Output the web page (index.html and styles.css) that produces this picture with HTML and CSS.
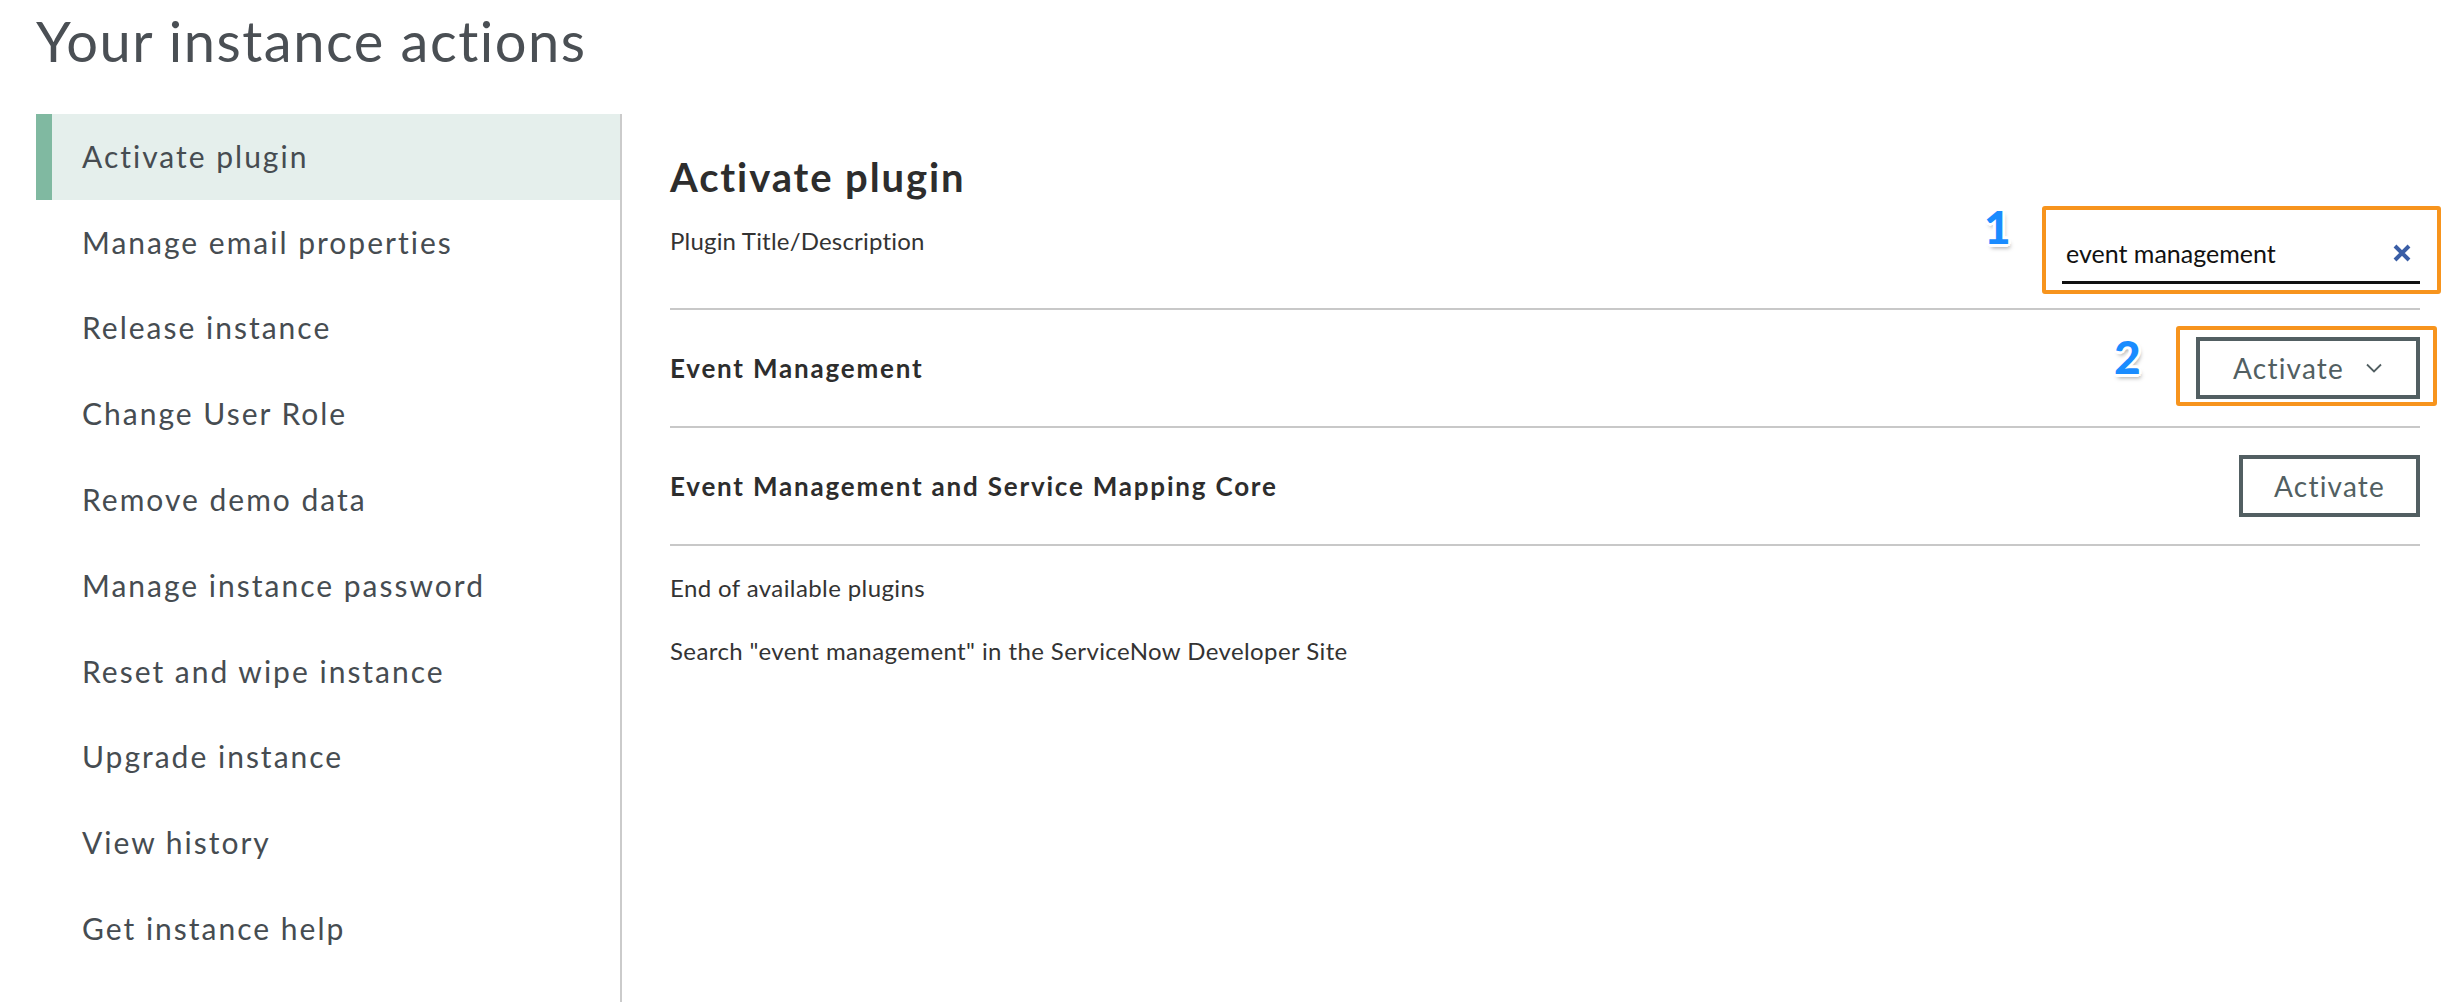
FILE: index.html
```html
<!DOCTYPE html>
<html lang="en">
<head>
<meta charset="utf-8">
<title>Your instance actions</title>
<link rel="stylesheet" href="styles.css">
</head>
<body>
<h1 class="page-title">Your instance actions</h1>
<div class="layout">
  <nav class="sidebar">
    <div class="nav-item active">Activate plugin</div>
    <div class="nav-item">Manage email properties</div>
    <div class="nav-item">Release instance</div>
    <div class="nav-item">Change User Role</div>
    <div class="nav-item">Remove demo data</div>
    <div class="nav-item">Manage instance password</div>
    <div class="nav-item">Reset and wipe instance</div>
    <div class="nav-item">Upgrade instance</div>
    <div class="nav-item">View history</div>
    <div class="nav-item">Get instance help</div>
  </nav>
  <main class="main">
    <div class="header">
      <div class="header-left">
        <h2 class="section-title">Activate plugin</h2>
        <div class="field-label">Plugin Title/Description</div>
      </div>
      <div class="search-field">
        <span class="search-text">event management</span>
        <svg class="clear-icon" width="18" height="18" viewBox="0 0 18 18"><path d="M2 2 L16 16 M16 2 L2 16" stroke="#3a5ea6" stroke-width="4" fill="none"/></svg>
        <span class="ring"></span>
        <span class="step step-1">1</span>
      </div>
    </div>
    <div class="plugin-row">
      <div class="plugin-name">Event Management</div>
      <button class="btn btn-drop">Activate <svg class="chev" width="16" height="10" viewBox="0 0 16 10"><polyline points="1,1.5 8,8.5 15,1.5" fill="none" stroke="#525f62" stroke-width="1.8"/></svg>
        <span class="ring ring-btn"></span>
        <span class="step step-2">2</span>
      </button>
    </div>
    <div class="plugin-row">
      <div class="plugin-name">Event Management and Service Mapping Core</div>
      <button class="btn">Activate</button>
    </div>
    <p class="note note-first">End of available plugins</p>
    <p class="note">Search "event management" in the ServiceNow Developer Site</p>
  </main>
</div>
</body>
</html>
```
FILE: styles.css
```css
* { box-sizing: border-box; }
html, body { margin: 0; padding: 0; background: #fff; }
body { font-family: Lato, "Noto Sans", sans-serif; color: #2e2e2e; }

.page-title {
  margin: 0;
  padding: 5px 0 0 36px;
  font-size: 56px;
  line-height: 72px;
  font-weight: 400;
  letter-spacing: 1.5px;
  color: #4a4f54;
}

.layout {
  display: flex;
  margin: 37px 0 0 36px;
  padding-right: 40px;
}

.sidebar {
  width: 586px;
  flex: none;
  min-height: 888px;
  border-right: 2px solid #cbcbcb;
}

.nav-item {
  height: 85.8px;
  display: flex;
  align-items: center;
  padding-left: 46px;
  padding-bottom: 2px;
  font-size: 30px;
  letter-spacing: 2px;
  color: #464c51;
}
.nav-item.active {
  background: #e5efec;
  border-left: 16px solid #80b9a1;
  padding-left: 30px;
}

.main {
  flex: 1;
  padding-left: 48px;
}

.header {
  display: flex;
  justify-content: space-between;
  align-items: flex-start;
  padding-top: 39px;
  padding-bottom: 24px;
  border-bottom: 2px solid #c8c8c8;
}

.section-title {
  margin: 0;
  font-size: 40px;
  line-height: 48px;
  font-weight: 700;
  letter-spacing: 1.9px;
  color: #2d2d2d;
}

.field-label {
  margin-top: 25px;
  font-size: 24px;
  line-height: 30px;
  letter-spacing: 0.2px;
  color: #333;
}

.search-field {
  position: relative;
  width: 358px;
  margin-top: 82px;
  display: flex;
  align-items: center;
  justify-content: space-between;
  padding: 0 9px 10px 4px;
  border-bottom: 3px solid #111;
  line-height: 36px;
  font-size: 25px;
  color: #111;
}
.clear-icon { display: block; }

.ring {
  position: absolute;
  top: -29px;
  left: -20px;
  right: -21px;
  bottom: -13px;
  border: 4px solid #f7941d;
  border-radius: 3px;
  pointer-events: none;
}

.step {
  position: absolute;
  font-family: Lato, sans-serif;
  font-weight: 900;
  font-size: 46px;
  line-height: 46px;
  letter-spacing: 0;
  color: #1a8cff;
  text-shadow:
    -3px 0 #fff, 3px 0 #fff, 0 -3px #fff, 0 3px #fff,
    -2px -2px #fff, 2px 2px #fff, -2px 2px #fff, 2px -2px #fff,
    2px 4px 4px rgba(0, 0, 0, 0.35);
}
.step-1 { left: -78px; top: -31px; }
.step-2 { left: -86px; top: -7px; }

.plugin-row {
  display: flex;
  align-items: center;
  justify-content: space-between;
  height: 118px;
  border-bottom: 2px solid #c8c8c8;
}

.plugin-name {
  font-size: 26px;
  font-weight: 700;
  letter-spacing: 1.8px;
  color: #2d2d2d;
}

.btn {
  position: relative;
  display: flex;
  align-items: center;
  height: 62px;
  padding: 0 31px;
  border: 4px solid #525f62;
  background: #fff;
  font-family: Lato, sans-serif;
  font-size: 28px;
  letter-spacing: 1.2px;
  color: #525f62;
}
.btn-drop { padding: 0 34px 0 33px; gap: 22px; }
.chev { display: block; }
.ring-btn { top: -15px; left: -24px; right: -21px; bottom: -11px; }

.note {
  margin: 0;
  font-size: 24px;
  line-height: 30px;
  letter-spacing: 0.4px;
  color: #333;
}
.note-first { margin-top: 27px; margin-bottom: 33px; }
```
